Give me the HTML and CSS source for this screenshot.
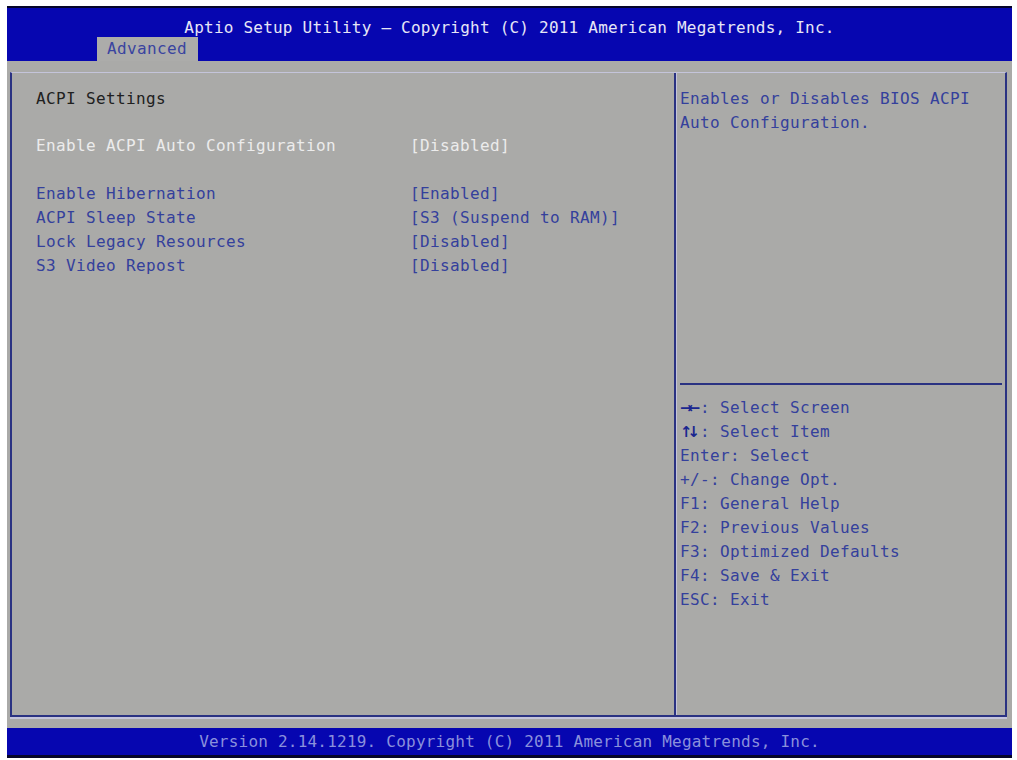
FILE: index.html
```html
<!DOCTYPE html>
<html>
<head>
<meta charset="utf-8">
<link rel="stylesheet" href="styles.css">
</head>
<body>
<div class="screen">
  <div class="header">
    <div class="title">Aptio Setup Utility – Copyright (C) 2011 American Megatrends, Inc.</div>
    <div class="tabs"><div class="tab">Advanced</div></div>
  </div>
  <div class="body">
    <div class="panel">
      <div class="main">
        <div class="section-title">ACPI Settings</div>
        <div class="row row-active gap-after">
          <span class="label">Enable ACPI Auto Configuration</span>
          <span class="value">[Disabled]</span>
        </div>
        <div class="row">
          <span class="label">Enable Hibernation</span>
          <span class="value">[Enabled]</span>
        </div>
        <div class="row">
          <span class="label">ACPI Sleep State</span>
          <span class="value">[S3 (Suspend to RAM)]</span>
        </div>
        <div class="row">
          <span class="label">Lock Legacy Resources</span>
          <span class="value">[Disabled]</span>
        </div>
        <div class="row">
          <span class="label">S3 Video Repost</span>
          <span class="value">[Disabled]</span>
        </div>
      </div>
      <div class="help">
        <div class="help-desc">Enables or Disables BIOS ACPI<br>Auto Configuration.</div>
        <div class="help-rule"></div>
        <div class="help-keys">
          <div class="key"><span class="arrows">→←</span>: Select Screen</div>
          <div class="key"><span class="arrows">↑↓</span>: Select Item</div>
          <div class="key">Enter: Select</div>
          <div class="key">+/-: Change Opt.</div>
          <div class="key">F1: General Help</div>
          <div class="key">F2: Previous Values</div>
          <div class="key">F3: Optimized Defaults</div>
          <div class="key">F4: Save &amp; Exit</div>
          <div class="key">ESC: Exit</div>
        </div>
      </div>
    </div>
  </div>
  <div class="footer">Version 2.14.1219. Copyright (C) 2011 American Megatrends, Inc.</div>
</div>
</body>
</html>
```

FILE: styles.css
```css
html, body {
  margin: 0;
  padding: 0;
  background: #ffffff;
}

.screen {
  width: 1005px;
  margin: 6px 0 0 7px;
  font-family: "DejaVu Sans Mono", "Liberation Mono", monospace;
  font-size: 16px;
  letter-spacing: 0.37px;
  line-height: 24px;
  background: #aaaaa8;
}

.header {
  background: #0606b0;
  border-top: 2px solid #05052a;
  height: 53px;
  display: flex;
  flex-direction: column;
}

.title {
  height: 29px;
  box-sizing: border-box;
  padding-top: 8px;
  text-align: center;
  color: #e6e6f6;
  letter-spacing: 0.22px;
  overflow: hidden;
}

.tabs {
  padding-left: 90px;
  display: flex;
}

.tab {
  width: 101px;
  height: 24px;
  box-sizing: border-box;
  padding-left: 10px;
  background: #acacaa;
  color: #3a44a0;
}

.body {
  padding: 11px 5px 11px 3px;
}

.panel {
  height: 645px;
  box-sizing: border-box;
  display: grid;
  grid-template-columns: 664px 1fr;
  border-top: 1px solid #c4c4da;
  border-left: 2px solid #2a3282;
  border-right: 2px solid #2a3282;
  border-bottom: 2px solid #2a3282;
  box-shadow: 0 2px 0 #c4c4da;
}

.main {
  border-right: 2px solid #2a3282;
  box-shadow: 1px 0 0 #c4c4da;
  padding: 14px 0 0 24px;
}

.section-title {
  color: #202020;
  margin-bottom: 23px;
}

.row {
  display: grid;
  grid-template-columns: 374px auto;
  color: #34409c;
}

.row-active {
  color: #ececec;
}

.gap-after {
  margin-bottom: 24px;
}

.help {
  display: flex;
  flex-direction: column;
  color: #34409c;
}

.help-desc {
  height: 310px;
  box-sizing: border-box;
  padding: 14px 0 0 4px;
}

.help-rule {
  height: 2px;
  margin: 0 3px 0 4px;
  background: #2a3282;
}

.help-keys {
  padding: 11px 0 0 4px;
}

.key {
  height: 24px;
  overflow: hidden;
}

.arrows {
  display: inline-block;
  width: 20px;
  line-height: 16px;
  font-family: "DejaVu Sans", sans-serif;
  font-size: 15px;
  font-weight: bold;
  letter-spacing: -5px;
  color: #1a2690;
}

.footer {
  height: 27px;
  line-height: 27px;
  background: #0606b0;
  border-bottom: 3px solid #05052a;
  color: #8a90dc;
  text-align: center;
  letter-spacing: 0.22px;
}
```
